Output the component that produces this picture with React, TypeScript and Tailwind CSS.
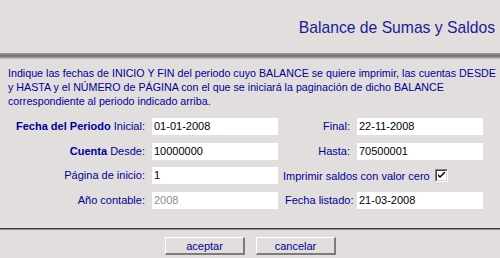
import React from 'react';

const label = "text-[11px] leading-[17px] text-[#000099] text-right whitespace-nowrap";
const field = "h-[17px] w-[126px] bg-white pl-[2px] text-[11px] leading-[17px] text-black";
const btn =
  "w-[80px] h-[18px] border-t border-l border-white border-b-2 border-r-2 border-b-[#7c7c7c] border-r-[#7c7c7c] text-[11px] leading-[14px] text-[#000099]";

export default function App() {
  return (
    <div className="w-[500px] h-[258px] bg-[#e1dedd] overflow-hidden font-['Liberation_Sans',Arial,sans-serif]">
      {/* Header */}
      <div className="h-[53px] pt-[18px] pr-[5px] text-right">
        <h1 className="text-[15.7px] leading-[20px] text-[#1a1a99]">Balance de Sumas y Saldos</h1>
      </div>
      <div className="h-[6px] bg-gradient-to-b from-[#9a9a9a] via-[#6e6e6e] to-[#cfcccb]" />

      {/* Intro */}
      <p className="mt-[7px] px-[8px] text-[10.7px] leading-[14px] text-[#000099] whitespace-nowrap">
        Indique las fechas de INICIO Y FIN del periodo cuyo BALANCE se quiere imprimir, las cuentas DESDE
        <br />
        y HASTA y el NÚMERO de PÁGINA con el que se iniciará la paginación de dicho BALANCE
        <br />
        correspondiente al periodo indicado arriba.
      </p>

      {/* Form */}
      <div className="mt-[10px] grid grid-cols-[145px_126px_65px_126px] gap-x-[7px] gap-y-[7.7px] items-center">
        <div className={label}>
          <b>Fecha del Periodo</b> Inicial:
        </div>
        <div className={field}>01-01-2008</div>
        <div className={label}>Final:</div>
        <div className={field}>22-11-2008</div>

        <div className={label}>
          <b>Cuenta</b> Desde:
        </div>
        <div className={field}>10000000</div>
        <div className={label}>Hasta:</div>
        <div className={field}>70500001</div>

        <div className={label}>Página de inicio:</div>
        <div className={field}>1</div>
        <div className="col-span-2 -ml-[2px] flex items-center gap-[5px] h-[17px]">
          <span className="text-[11px] text-[#000099] whitespace-nowrap">Imprimir saldos con valor cero</span>
          <span className="w-[13px] h-[13px] border-t border-l border-[#808080] border-b border-r border-b-white border-r-white">
            <span className="flex w-full h-full items-center justify-center bg-white border-t border-l border-[#404040] border-b border-r border-b-[#d4d0c8] border-r-[#d4d0c8]">
              <svg width="7" height="7" viewBox="0 0 7 7">
                <path d="M0 2 L0 4 L2 6 L7 1 L7 -1 L2 4 Z" fill="#000" />
              </svg>
            </span>
          </span>
        </div>

        <div className={label}>Año contable:</div>
        <div className={field + " !text-[#8c8c8c]"}>2008</div>
        <div className={label}>Fecha listado:</div>
        <div className={field}>21-03-2008</div>
      </div>

      {/* Bottom divider */}
      <div className="mt-[19px] h-[1px] bg-[#3c3c3c]" />
      <div className="h-[1px] bg-[#8a8a8a]" />

      {/* Buttons */}
      <div className="mt-[7px] flex justify-center gap-[11px] pl-[1px]">
        <button className={btn}>aceptar</button>
        <button className={btn}>cancelar</button>
      </div>
    </div>
  );
}
